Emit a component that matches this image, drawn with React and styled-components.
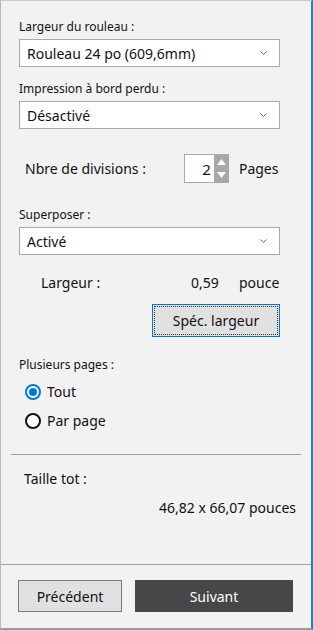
import React from 'react';
import styled, { createGlobalStyle } from 'styled-components';

const GlobalStyle = createGlobalStyle`
  html, body {
    margin: 0;
    padding: 0;
    background: #f2f2f2;
  }
  body {
    font-family: "Noto Sans", "Open Sans", sans-serif;
    color: #1a1a1a;
  }
`;

function Chevron() {
  return (
    <svg width="7" height="4" viewBox="0 0 7 4">
      <path d="M0.5 0.5 L3.5 3.5 L6.5 0.5" fill="none" stroke="#666" strokeWidth="1" />
    </svg>
  );
}

function Select({ value }) {
  return (
    <SSelect>
      <span>{value}</span>
      <Chevron />
    </SSelect>
  );
}

function Radio({ checked, label }) {
  return (
    <SRadioRow>
      <SRadioDot checked={checked} />
      <span>{label}</span>
    </SRadioRow>
  );
}

export default function App() {
  return (
    <>
      <GlobalStyle />
      <SWindow>
        <SBody>
          <SLabel>Largeur du rouleau :</SLabel>
          <Select value="Rouleau 24 po (609,6mm)" />

          <SLabel top="13px">Impression à bord perdu :</SLabel>
          <Select value="Désactivé" />

          <SDivRow>
            <SRowText>Nbre de divisions :</SRowText>
            <SSpinner>
              <SSpinInput>2</SSpinInput>
              <SSpinArrows>
                <svg width="15" height="29" viewBox="0 0 15 29">
                  <path d="M3 11 L7.5 5 L12 11 Z" fill="#fff" />
                  <path d="M3 18 L7.5 24 L12 18 Z" fill="#fff" />
                </svg>
              </SSpinArrows>
            </SSpinner>
            <SRowText>Pages</SRowText>
          </SDivRow>

          <SLabel top="23px">Superposer :</SLabel>
          <Select value="Activé" />

          <SWidthRow>
            <SRowText>Largeur :</SRowText>
            <SRowText>0,59</SRowText>
            <SRowText>pouce</SRowText>
          </SWidthRow>

          <SBtnLine>
            <SSpecButton>Spéc. largeur</SSpecButton>
          </SBtnLine>

          <SLabel top="19px">Plusieurs pages :</SLabel>
          <Radio checked label="Tout" />
          <Radio label="Par page" />
        </SBody>

        <SRule />

        <STotal>
          <SRowText>Taille tot :</SRowText>
          <STotalValue>46,82 x 66,07 pouces</STotalValue>
        </STotal>

        <SFooter>
          <SGhostButton>Précédent</SGhostButton>
          <SPrimaryButton>Suivant</SPrimaryButton>
        </SFooter>
      </SWindow>
    </>
  );
}

const SWindow = styled.div`
  box-sizing: border-box;
  width: 313px;
  height: 630px;
  display: flex;
  flex-direction: column;
  background: #f2f2f2;
  border-top: 1px solid #c9c9c9;
  border-left: 1px solid #b9b9b9;
  border-right: 2px solid #1e7fd6;
  border-bottom: 2px solid #9a9a9a;
`;

const SBody = styled.div`
  padding: 17px 32px 0 18px;
  display: flex;
  flex-direction: column;
`;

const SLabel = styled.div`
  margin-top: ${p => p.top || '0'};
  font-size: 12px;
  line-height: 18px;
  margin-bottom: 3px;
  color: #111;
`;

const SSelect = styled.div`
  box-sizing: border-box;
  height: 28px;
  width: 261px;
  background: #fff;
  border: 1px solid #a9a9a9;
  display: flex;
  align-items: center;
  justify-content: space-between;
  padding: 0 12px 0 7px;
  font-size: 14px;
  color: #111;
`;

const SDivRow = styled.div`
  display: flex;
  align-items: center;
  margin-top: 25px;
  padding-left: 6px;
`;

const SRowText = styled.span`
  font-size: 14px;
  line-height: 20px;
  color: #111;
`;

const SSpinner = styled.div`
  display: flex;
  height: 29px;
  margin-left: 38px;
  margin-right: 10px;
`;

const SSpinInput = styled.div`
  box-sizing: border-box;
  width: 30px;
  background: #fff;
  border: 1px solid #a9a9a9;
  border-right: none;
  display: flex;
  align-items: center;
  justify-content: flex-end;
  padding-right: 3px;
  font-size: 15px;
`;

const SSpinArrows = styled.div`
  width: 15px;
  background: #a8a8a8;
  display: flex;
`;

const SWidthRow = styled.div`
  display: grid;
  grid-template-columns: 150px 48px auto;
  align-items: center;
  margin-top: 18px;
  padding-left: 22px;
`;

const SBtnLine = styled.div`
  display: flex;
  justify-content: flex-end;
  width: 261px;
  margin-top: 11px;
`;

const SSpecButton = styled.button`
  box-sizing: border-box;
  width: 128px;
  height: 33px;
  background: #e1e1e1;
  border: 1px solid #0078d7;
  outline: 1px dotted #333;
  outline-offset: -3px;
  font-family: inherit;
  font-size: 14px;
  color: #111;
  padding: 0;
`;

const SRadioRow = styled.div`
  display: flex;
  align-items: center;
  gap: 6px;
  height: 29px;
  padding-left: 6px;
  font-size: 14px;
  color: #111;
`;

const SRadioDot = styled.span`
  box-sizing: border-box;
  width: 16px;
  height: 16px;
  border-radius: 50%;
  border: 2px solid ${p => (p.checked ? '#0078d7' : '#111')};
  background: #fff;
  display: flex;
  align-items: center;
  justify-content: center;

  &::after {
    content: '';
    width: 8px;
    height: 8px;
    border-radius: 50%;
    background: ${p => (p.checked ? '#0078d7' : 'transparent')};
  }
`;

const SRule = styled.div`
  height: 1px;
  background: #a0a0a0;
  margin: 19px 10px 0 10px;
`;

const STotal = styled.div`
  padding: 14px 15px 0 23px;
  display: flex;
  flex-direction: column;
`;

const STotalValue = styled.span`
  align-self: flex-end;
  margin-top: 9px;
  font-size: 14px;
  line-height: 20px;
  color: #111;
`;

const SFooter = styled.div`
  margin-top: auto;
  border-top: 1px solid #a0a0a0;
  height: 64px;
  display: flex;
  align-items: flex-start;
  gap: 13px;
  padding: 15px 0 0 17px;
  box-sizing: border-box;
`;

const SGhostButton = styled.button`
  box-sizing: border-box;
  width: 104px;
  height: 32px;
  background: #e1e1e1;
  border: 1px solid #7a7a7a;
  font-family: inherit;
  font-size: 14px;
  color: #111;
`;

const SPrimaryButton = styled.button`
  box-sizing: border-box;
  width: 158px;
  height: 32px;
  background: #474747;
  border: none;
  font-family: inherit;
  font-size: 14px;
  color: #fff;
`;
